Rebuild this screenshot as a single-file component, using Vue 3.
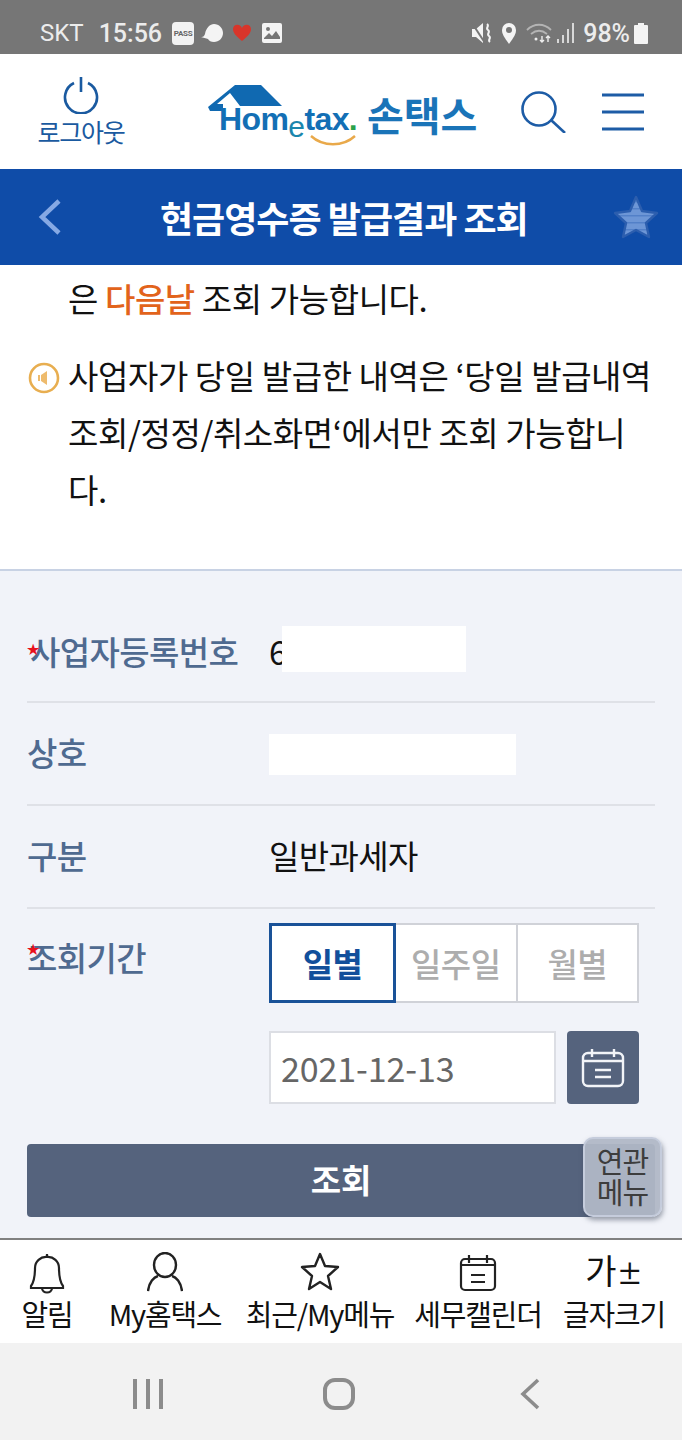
<script setup>
const tabs = [
  { id: 'bell', label: '알림' },
  { id: 'user', label: 'My홈택스' },
  { id: 'star', label: '최근/My메뉴' },
  { id: 'cal', label: '세무캘린더' },
  { id: 'font', label: '글자크기' }
]
const periods = ['일별', '일주일', '월별']
</script>

<template>
  <div class="screen">
    <div class="status">
      <span class="carrier">SKT</span>
      <span class="clock">15:56</span>
      <span class="pass">PASS</span>
      <svg class="st-ic" width="24" height="22" viewBox="0 0 24 22"><path d="M1 15c3 0 3-1 4-3C6 6 10 2 14 2c5 0 9 4 9 9s-4 9-9 9c-3 0-5-1-6-3-2-1-5-1-7-2z" fill="#f4f4f4"/></svg>
      <svg class="st-ic" width="20" height="20" viewBox="0 0 20 20"><path d="M10 18C4 13 1 10 1 6c0-5 7-6 9-1 2-5 9-4 9 1 0 4-3 7-9 12z" fill="#d8352a"/></svg>
      <svg class="st-ic st-img" width="20" height="20" viewBox="0 0 20 20"><rect width="20" height="20" rx="2" fill="#f4f4f4"/><circle cx="6" cy="6" r="2" fill="#767676"/><path d="M2 15l5-5 3 3 4-5 4 6v2H2z" fill="#767676"/></svg>
      <span class="st-gap"></span>
      <svg width="22" height="24" viewBox="0 0 22 24"><path d="M1 8h4l7-6v20l-7-6H1z" fill="#f4f4f4"/><path d="M1 2l13 20" stroke="#767676" stroke-width="2"/><path d="M16 3c3 2-2 4 1 6s-2 4 1 6-2 4 1 6" stroke="#f4f4f4" stroke-width="2" fill="none"/></svg>
      <svg class="st-pin" width="16" height="22" viewBox="0 0 16 22"><path d="M8 22C3 15 1 12 1 8a7 7 0 0 1 14 0c0 4-2 7-7 14z" fill="#f4f4f4"/><circle cx="8" cy="8" r="3" fill="#767676"/></svg>
      <svg class="st-wifi" width="26" height="22" viewBox="0 0 26 22" fill="none" stroke="#b4b4b4" stroke-width="1.8"><path d="M1 8c7-7 17-7 24 0M5 12c5-4 11-4 16 0"/><circle cx="10" cy="17" r="1.5" fill="#eee" stroke="none"/><path d="M16 14v6M14 18l2 2 2-2M22 20v-6M20 16l2-2 2 2" stroke="#eee" stroke-width="1.4"/></svg>
      <svg class="st-sig" width="18" height="22" viewBox="0 0 18 22" fill="#d8d8d8"><rect x="0" y="17" width="2" height="4"/><rect x="5" y="13" width="2" height="8"/><rect x="10" y="7" width="2" height="14"/><rect x="15" y="1" width="2" height="20"/></svg>
      <span class="pct">98%</span>
      <svg width="14" height="21" viewBox="0 0 14 21"><path d="M4 0h6v2h3a1 1 0 0 1 1 1v17a1 1 0 0 1-1 1H1a1 1 0 0 1-1-1V3a1 1 0 0 1 1-1h3z" fill="#f4f4f4"/></svg>
    </div>

    <header class="head">
      <div class="logout">
        <svg width="38" height="38" viewBox="0 0 38 38" fill="none" stroke="#1a5aa0" stroke-width="2.6"><path d="M12 7a16 16 0 1 0 14 0M19 1v15"/></svg>
        <span>로그아웃</span>
      </div>
      <div class="logo">
        <svg class="roof" width="76" height="30" viewBox="0 0 76 30"><path d="M0 22 27 0h26l21 21H32L22 8 9 19h6v7H2z" fill="#1069b1"/></svg>
        <div class="logo-en">Hom<span class="logo-e">e</span>tax<span class="logo-dot">.</span></div>
        <svg class="smile" width="46" height="12" viewBox="0 0 46 12"><path d="M1 2c12 11 32 11 44 0" stroke="#e9a94a" stroke-width="2.4" fill="none"/></svg>
        <div class="logo-ko">손택스</div>
      </div>
      <div class="head-icons">
        <svg width="45" height="42" viewBox="0 0 45 42" fill="none" stroke="#1d5ca6" stroke-width="2.6"><circle cx="18" cy="18" r="16.5"/><path d="M30 29l14 13"/></svg>
        <svg class="burger" width="42" height="38" viewBox="0 0 42 38" stroke="#1d5ca6" stroke-width="3"><path d="M0 2h42M0 19h42M0 36h42"/></svg>
      </div>
    </header>

    <div class="title-bar">
      <svg width="24" height="36" viewBox="0 0 24 36" fill="none" stroke="#86a9e4" stroke-width="4.5"><path d="M21 2 4 18l17 16"/></svg>
      <h1>현금영수증 발급결과 조회</h1>
      <svg class="fav" width="48" height="46" viewBox="0 0 48 46">
        <defs>
          <pattern id="fav-lines" width="4" height="7" patternUnits="userSpaceOnUse">
            <rect width="4" height="7" fill="#6d96d6"/>
            <rect width="4" height="1.5" fill="#5280c8"/>
          </pattern>
        </defs>
        <path d="M24 3l6 14 15 2-11 10 3 14-13-7-13 7 3-14L3 19l15-2z" fill="url(#fav-lines)" stroke="#2c5eae" stroke-width="2.4" stroke-linejoin="round"/>
      </svg>
    </div>

    <section class="notice">
      <p class="line-first">은 <b>다음날</b> 조회 가능합니다.</p>
      <div class="note">
        <svg class="speaker" width="32" height="32" viewBox="0 0 32 32"><circle cx="16" cy="16" r="14" fill="#fff" stroke="#e8ae50" stroke-width="2.6"/><path d="M10 13h2v6h-2zM13 13l6-4v14l-6-4z" fill="#eebb6d"/></svg>
        <p>사업자가 당일 발급한 내역은 ‘당일 발급내역 조회/정정/취소화면‘에서만 조회 가능합니다.</p>
      </div>
    </section>

    <section class="form">
      <div class="row row-first">
        <label class="req">사업자등록번호</label>
        <div class="val"><span>6</span><i class="mask mask-a"></i></div>
      </div>
      <div class="row">
        <label>상호</label>
        <div class="val"><i class="mask mask-b"></i></div>
      </div>
      <div class="row">
        <label>구분</label>
        <div class="val">일반과세자</div>
      </div>
      <div class="row-period">
        <label class="req">조회기간</label>
        <div class="period">
          <div class="seg">
            <button v-for="(p, i) in periods" :key="p" :class="{ on: i === 0 }">{{ p }}</button>
          </div>
          <div class="date-wrap">
            <div class="date">2021-12-13</div>
            <div class="cal-btn">
              <svg width="44" height="40" viewBox="0 0 44 40" fill="none" stroke="#f2f4f8" stroke-width="2.4"><rect x="2" y="5" width="40" height="33" rx="5"/><path d="M11 1v8M33 1v8M2 13h40M14 22h16M14 29h16"/></svg>
            </div>
          </div>
        </div>
      </div>
      <div class="submit-wrap">
        <button class="submit">조회</button>
        <div class="rel-menu">연관<br>메뉴</div>
      </div>
    </section>

    <nav class="tabs">
      <div v-for="t in tabs" :key="t.id" class="tab">
        <svg v-if="t.id === 'bell'" class="ic-bell" width="36" height="42" viewBox="0 0 36 42" fill="none" stroke="#222" stroke-width="2.2"><path d="M18 4a11 11 0 0 0-12 11c0 10-1 14-4 18v2h32v-2c-3-4-4-8-4-18A11 11 0 0 0 18 4zM18 1v3M13 35c0 6 10 6 10 0"/></svg>
        <svg v-else-if="t.id === 'user'" width="36" height="40" viewBox="0 0 36 40" fill="none" stroke="#222" stroke-width="2.4"><ellipse cx="18" cy="13" rx="11" ry="12"/><path d="M1 39c1-9 6-14 10-15M35 39c-1-9-6-14-10-15"/></svg>
        <svg v-else-if="t.id === 'star'" width="40" height="40" viewBox="0 0 40 40" fill="none" stroke="#222" stroke-width="2.4" stroke-linejoin="round"><path d="M20 2l5 12 13 1-10 9 3 13-11-7-11 7 3-13L2 15l13-1z"/></svg>
        <svg v-else-if="t.id === 'cal'" width="38" height="38" viewBox="0 0 38 38" fill="none" stroke="#222" stroke-width="2.2"><rect x="2" y="5" width="34" height="31" rx="4"/><path d="M10 1v8M28 1v8M2 11h34M12 21h14M12 28h14"/></svg>
        <div v-else class="font-ic">가<span>±</span></div>
        <span class="tab-label">{{ t.label }}</span>
      </div>
    </nav>

    <div class="sys-nav">
      <svg width="32" height="30" viewBox="0 0 32 30" stroke="#8c8c8c" stroke-width="4"><path d="M3 0v30M16 0v30M29 0v30"/></svg>
      <svg class="home" width="32" height="32" viewBox="0 0 32 32" fill="none" stroke="#8c8c8c" stroke-width="4"><rect x="2" y="2" width="28" height="28" rx="10"/></svg>
      <svg width="20" height="32" viewBox="0 0 20 32" fill="none" stroke="#8c8c8c" stroke-width="3.6"><path d="M18 2 3 16l15 14"/></svg>
    </div>
  </div>
</template>

<style scoped>
.screen {
  width: 682px;
  height: 1440px;
  display: flex;
  flex-direction: column;
  overflow: hidden;
  background: #fff;
  font-family: "Noto Sans CJK KR", "Noto Sans", sans-serif;
  color: #111;
}
.status {
  height: 54px;
  background: #767676;
  display: flex;
  align-items: center;
  padding: 12px 34px 0 40px;
  color: #ececec;
  font-family: Roboto, sans-serif;
  box-sizing: border-box;
  flex: none;
}
.carrier { font-size: 24px; }
.clock { font-size: 25px; font-weight: 500; margin-left: 15px; margin-right: 10px; }
.pass {
  width: 22px;
  height: 23px;
  background: #f2f2f2;
  border-radius: 4px;
  color: #666;
  font-size: 8px;
  line-height: 23px;
  letter-spacing: -0.3px;
  text-align: center;
  font-weight: 700;
  margin-right: 6px;
}
.st-ic { margin-right: 8px; }
.st-img { margin-left: 2px; }
.st-gap { flex: 1; }
.st-pin { margin-left: 8px; margin-right: 9px; }
.st-wifi { margin-right: 5px; }
.pct { font-size: 25px; font-weight: 500; margin: 0 4px 0 8px; }

.head {
  height: 115px;
  display: flex;
  align-items: center;
  padding: 0 38px 0 36px;
  box-sizing: border-box;
  flex: none;
}
.logout {
  width: 90px;
  display: flex;
  flex-direction: column;
  align-items: center;
  color: #1a5aa0;
  font-size: 25px;
  line-height: 34px;
  letter-spacing: -1.2px;
  white-space: nowrap;
}
.logo {
  position: relative;
  width: 268px;
  height: 60px;
  margin-left: 82px;
  align-self: flex-start;
  margin-top: 31px;
}
.roof { position: absolute; left: 0; top: 0; }
.logo-en {
  position: absolute;
  left: 11px;
  top: 12px;
  font-family: "Liberation Sans", sans-serif;
  font-size: 32px;
  font-weight: 700;
  line-height: 44px;
  letter-spacing: -0.6px;
  color: #136fb5;
  white-space: nowrap;
}
.logo-e { font-size: 30px; position: relative; top: 7px; color: #1b86ad; font-weight: 400; }
.logo-dot { color: #2aa24a; }
.smile { position: absolute; left: 102px; top: 49px; }
.logo-ko {
  position: absolute;
  left: 159px;
  top: 3px;
  font-size: 40px;
  font-weight: 700;
  line-height: 52px;
  color: #1a74b8;
  white-space: nowrap;
}
.head-icons {
  margin-left: auto;
  display: flex;
  align-items: center;
}
.burger { margin-left: 36px; }

.title-bar {
  height: 96px;
  background: #0f4ca8;
  display: flex;
  align-items: center;
  padding: 0 22px 0 38px;
  box-sizing: border-box;
  flex: none;
}
.title-bar h1 {
  margin: 0 0 0 98px;
  color: #fff;
  font-size: 36px;
  font-weight: 700;
  letter-spacing: -1px;
  white-space: nowrap;
}
.fav { margin-left: auto; }

.notice {
  height: 304px;
  padding: 5px 31px 0 28px;
  box-sizing: border-box;
  font-size: 33px;
  line-height: 57px;
  letter-spacing: -0.4px;
  flex: none;
}
.notice p { margin: 0; }
.line-first { padding-left: 40px; }
.line-first b { color: #e2631b; font-weight: 500; }
.note { display: flex; margin-top: 20px; }
.speaker { flex: none; margin: 15px 8px 0 0; }

.form {
  flex: 1;
  background: #f1f3f9;
  border-top: 2px solid #c8d2e4;
  padding: 30px 27px 0;
  box-sizing: border-box;
}
.row {
  height: 103px;
  display: flex;
  align-items: center;
  border-bottom: 2px solid #dfe1e7;
  box-sizing: border-box;
  padding-bottom: 3px;
}
.row-first { height: 102px; padding-bottom: 0; }
label {
  width: 242px;
  flex: none;
  color: #4f6a90;
  font-size: 33px;
  font-weight: 500;
  letter-spacing: -0.6px;
  position: relative;
  white-space: nowrap;
}
.req::before {
  content: "★";
  position: absolute;
  left: -1px;
  top: 50%;
  margin-top: -11px;
  color: #e8101c;
  font-family: "DejaVu Sans", sans-serif;
  font-size: 16px;
  line-height: 20px;
}
.row-first label { padding-left: 3px; width: 239px; }
.val {
  display: flex;
  align-items: center;
  font-size: 33px;
  letter-spacing: -0.6px;
  color: #111;
}
.mask { display: block; height: 42px; background: #fff; }
.mask-a { width: 184px; height: 46px; margin-left: -5px; margin-top: -5px; }
.mask-b { width: 247px; height: 41px; margin-top: 4px; }

.row-period {
  display: flex;
  padding-top: 14px;
}
.row-period label { line-height: 44px; padding-top: 12px; height: 44px; }
.period { display: flex; flex-direction: column; gap: 28px; }
.seg { display: flex; width: 370px; height: 80px; }
.seg button {
  flex: 1;
  background: #fff;
  border: 2px solid #d0d2d8;
  border-left: 0;
  color: #adadad;
  font: 500 33px "Noto Sans CJK KR", sans-serif;
  letter-spacing: -0.5px;
  padding: 0;
}
.seg button.on {
  flex: none;
  width: 127px;
  border: 3px solid #1a5298;
  color: #124f9b;
  font-weight: 700;
}
.date-wrap { display: flex; gap: 11px; height: 73px; }
.date {
  width: 287px;
  background: #fff;
  border: 2px solid #dcdee4;
  box-sizing: border-box;
  color: #666;
  font-size: 34px;
  line-height: 69px;
  padding-left: 10px;
  letter-spacing: -0.1px;
}
.cal-btn {
  width: 72px;
  background: #55637d;
  border-radius: 4px;
  display: flex;
  align-items: center;
  justify-content: center;
}
.submit-wrap { position: relative; margin-top: 40px; }
.submit {
  display: block;
  width: 100%;
  height: 73px;
  background: #55637d;
  color: #fff;
  border: 0;
  border-radius: 4px;
  font: 700 33px "Noto Sans CJK KR", sans-serif;
  padding: 0 0 4px;
}
.rel-menu {
  position: absolute;
  right: -7px;
  top: -7px;
  width: 79px;
  height: 80px;
  box-sizing: border-box;
  background: rgba(176, 183, 198, 0.95);
  border: 2px solid #c5ccdc;
  border-radius: 10px;
  box-shadow: 1px 3px 5px rgba(60, 70, 90, 0.5);
  color: #3d3d3d;
  font-size: 29px;
  line-height: 31px;
  letter-spacing: -1px;
  text-align: center;
  padding-top: 6px;
}

.tabs {
  height: 105px;
  flex: none;
  box-sizing: border-box;
  border-top: 2px solid #808080;
  display: grid;
  grid-template-columns: 94px 142px 168px 148px 124px;
  padding-right: 6px;
  background: #fff;
}
.tab {
  display: flex;
  flex-direction: column;
  align-items: center;
  justify-content: flex-end;
  position: relative;
  padding-bottom: 10px;
}
.tab svg { position: absolute; bottom: 51px; }
.tab svg.ic-bell { bottom: 48px; }
.tab-label {
  font-size: 29px;
  line-height: 40px;
  letter-spacing: -1.2px;
  white-space: nowrap;
  color: #111;
}
.font-ic {
  position: absolute;
  bottom: 48px;
  font-size: 34px;
  font-weight: 400;
  line-height: 44px;
  white-space: nowrap;
}
.font-ic span { font-size: 26px; font-weight: 500; }

.sys-nav {
  height: 97px;
  flex: none;
  background: #f2f2f2;
  display: flex;
  align-items: center;
  justify-content: space-between;
  padding: 4px 142px 0 132px;
  box-sizing: border-box;
}
.home { margin-right: 6px; }
</style>
